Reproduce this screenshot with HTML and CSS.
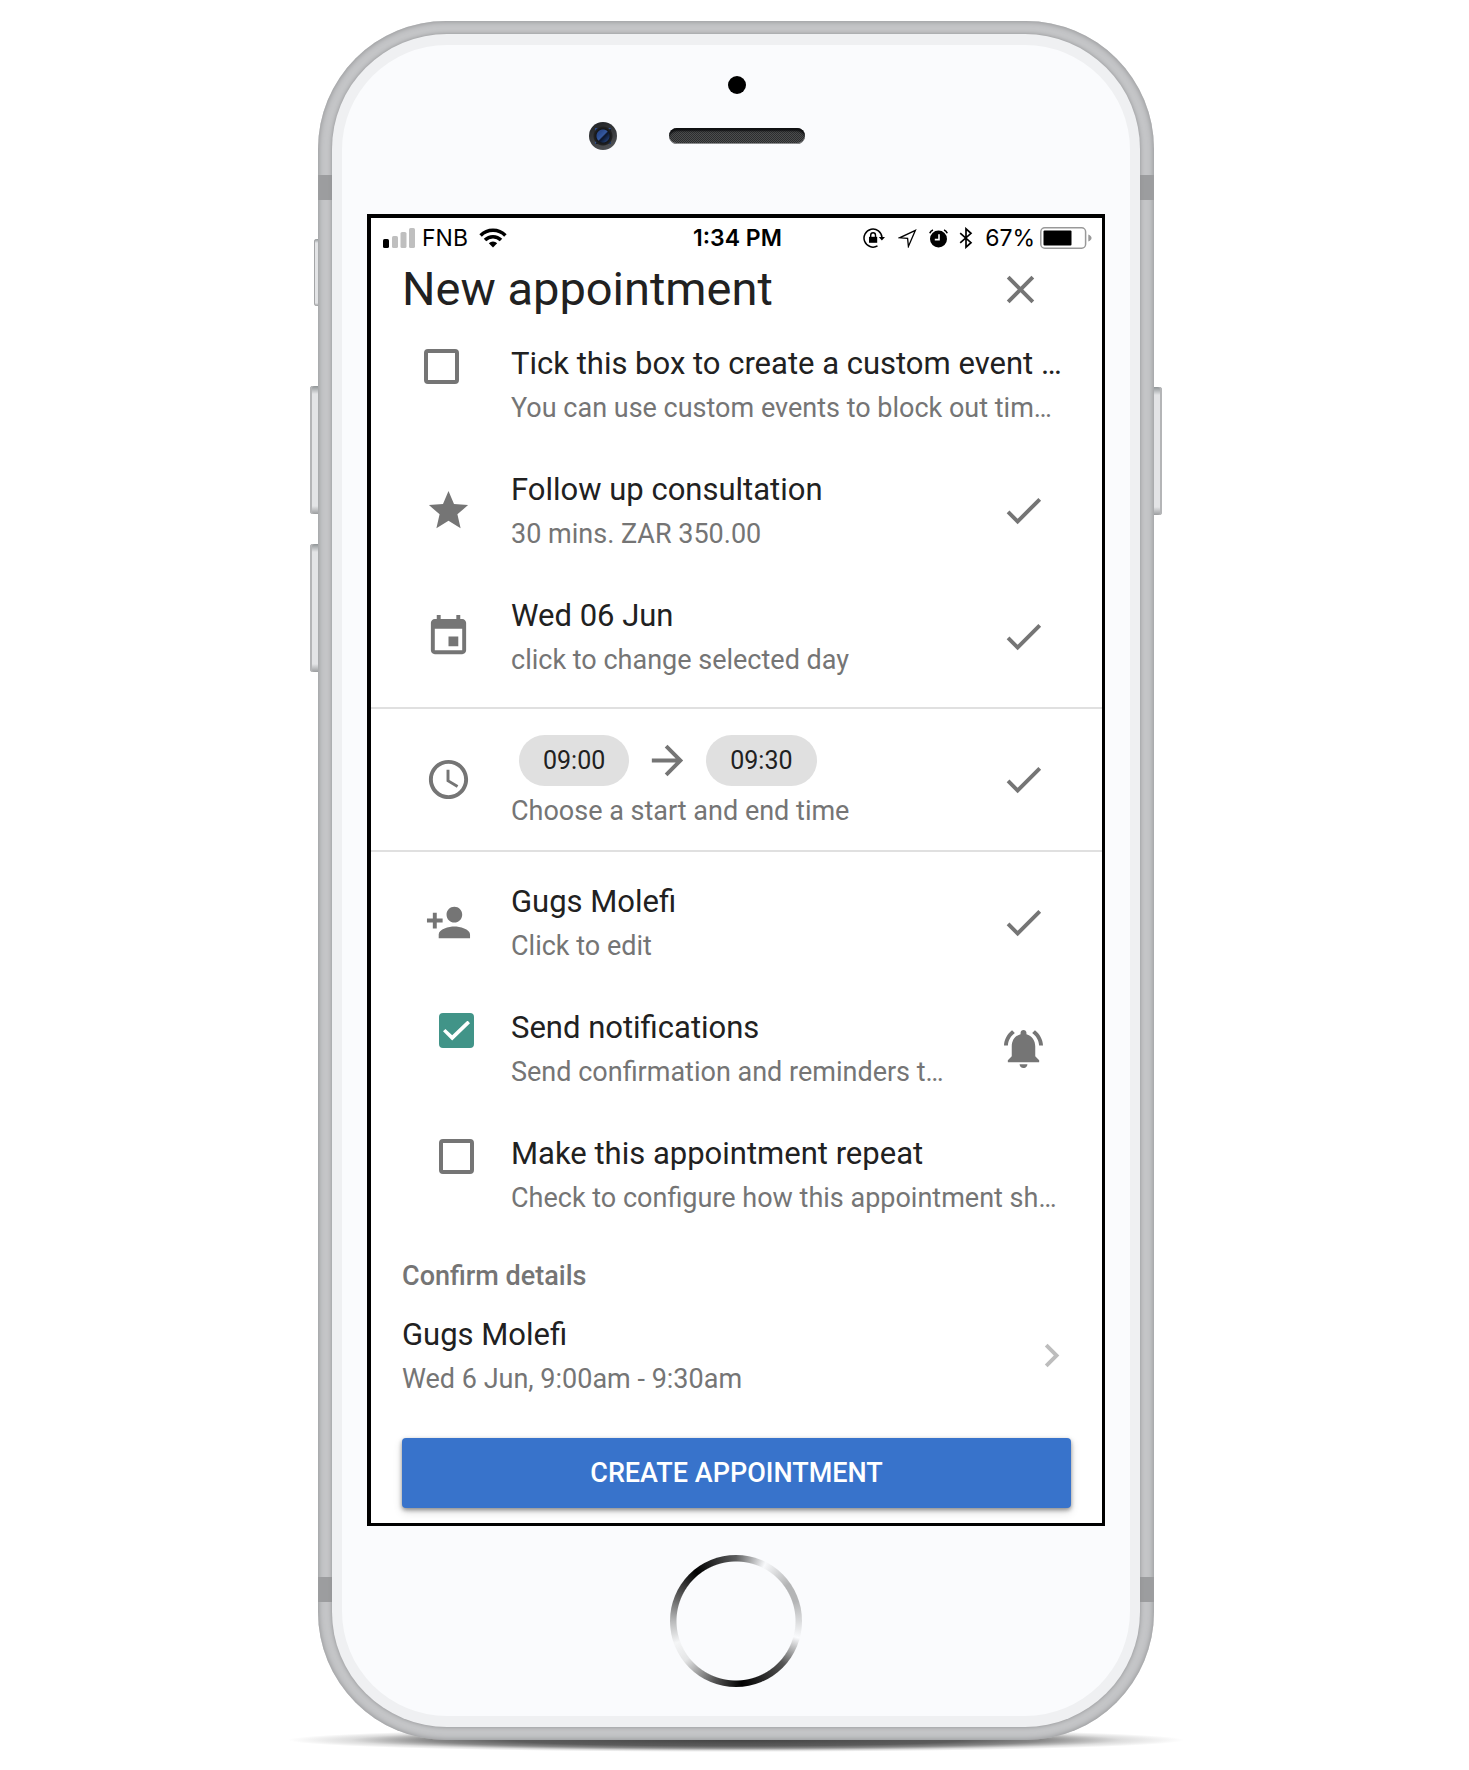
FILE: index.html
```html
<!DOCTYPE html>
<html lang="en">
<head>
<meta charset="utf-8">
<meta name="viewport" content="width=device-width, initial-scale=1">
<title>New appointment</title>
<link rel="stylesheet" href="styles.css">
</head>
<body>
<svg class="sprite" aria-hidden="true">
  <symbol id="i-close" viewBox="0 0 24 24"><path d="M19 6.41L17.59 5 12 10.59 6.41 5 5 6.41 10.59 12 5 17.59 6.41 19 12 13.41 17.59 19 19 17.59 13.41 12z"/></symbol>
  <symbol id="i-star" viewBox="0 0 24 24"><path d="M12 17.27L18.18 21l-1.64-7.03L22 9.24l-7.19-.61L12 2 9.19 8.63 2 9.24l5.46 4.73L5.82 21z"/></symbol>
  <symbol id="i-event" viewBox="0 0 24 24"><path d="M17 12h-5v5h5v-5zM16 1v2H8V1H6v2H5c-1.11 0-1.99.9-1.99 2L3 19c0 1.1.89 2 2 2h14c1.1 0 2-.9 2-2V5c0-1.1-.9-2-2-2h-1V1h-2zm3 18H5V8h14v11z"/></symbol>
  <symbol id="i-clock" viewBox="0 0 24 24"><path d="M11.99 2C6.47 2 2 6.48 2 12s4.47 10 9.99 10C17.52 22 22 17.52 22 12S17.52 2 11.99 2zM12 20c-4.42 0-8-3.58-8-8s3.58-8 8-8 8 3.58 8 8-3.58 8-8 8zm.5-13H11v6l5.25 3.15.75-1.23-4.5-2.67z"/></symbol>
  <symbol id="i-person" viewBox="0 0 24 24"><path d="M15 12c2.21 0 4-1.79 4-4s-1.79-4-4-4-4 1.79-4 4 1.79 4 4 4zm-9-2V7H4v3H1v2h3v3h2v-3h3v-2H6zm9 4c-2.67 0-8 1.34-8 4v2h16v-2c0-2.66-5.33-4-8-4z"/></symbol>
  <symbol id="i-check" viewBox="0 0 24 24"><path d="M9 16.17L4.83 12l-1.42 1.41L9 19 21 7l-1.41-1.41z"/></symbol>
  <symbol id="i-bell" viewBox="0 0 24 24"><path d="M7.58 4.08L6.15 2.65C3.75 4.48 2.17 7.3 2.03 10.5h2c.15-2.65 1.51-4.97 3.55-6.42zm12.39 6.42h2c-.15-3.2-1.73-6.02-4.12-7.85l-1.42 1.43c2.02 1.45 3.39 3.77 3.54 6.42zM18 11c0-3.07-1.64-5.64-4.5-6.32V4c0-.83-.67-1.5-1.5-1.5s-1.5.67-1.5 1.5v.68C7.63 5.36 6 7.92 6 11v5l-2 2v1h16v-1l-2-2v-5zm-6 11c.14 0 .27-.01.4-.04.65-.14 1.18-.58 1.44-1.18.1-.24.15-.5.15-.78h-4c.01 1.1.9 2 2.01 2z"/></symbol>
  <symbol id="i-arrow" viewBox="0 0 24 24"><path d="M12 4l-1.41 1.41L16.17 11H4v2h12.17l-5.58 5.59L12 20l8-8z"/></symbol>
  <symbol id="i-chevron" viewBox="0 0 24 24"><path d="M10 6L8.59 7.41 13.17 12l-4.58 4.59L10 18l6-6z"/></symbol>
</svg>

<main class="stage">
  <div class="phone">
    <span class="key key-mute"></span>
    <span class="key key-up"></span>
    <span class="key key-down"></span>
    <span class="key key-power"></span>
    <span class="band band-tl"></span>
    <span class="band band-tr"></span>
    <span class="band band-bl"></span>
    <span class="band band-br"></span>

    <div class="face">
      <div class="sensors">
        <span class="dot"></span>
        <div class="earpiece">
          <span class="camera"></span>
          <span class="speaker"></span>
        </div>
      </div>

      <div class="screen">
        <div class="status">
          <div class="status-side">
            <svg class="signal" viewBox="0 0 32 20" aria-hidden="true">
              <rect x="0" y="11" width="6" height="9" rx="1.6"/>
              <g fill="#bfbfbf"><rect x="9" y="8" width="6" height="12" rx="1.6"/><rect x="17.500" y="4" width="6" height="16" rx="1.600"/><rect x="26" y="0" width="6" height="20" rx="1.600"/></g>
            </svg>
            <span>FNB</span>
            <svg class="wifi" viewBox="0 0 28 20" aria-hidden="true">
              <g fill="none" stroke="#000" stroke-width="3.500"><path d="M1.600 7.400a17.500 17.500 0 0 1 24.800 0"/><path d="M6 12a11.300 11.300 0 0 1 16 0"/></g>
              <path d="M14 19.500l-4.200-4.200a6 6 0 0 1 8.400 0z"/>
            </svg>
          </div>
          <time class="status-time">1:34 PM</time>
          <div class="status-side status-right">
            <svg class="s-lock" viewBox="0 0 22 20" aria-hidden="true">
              <path d="M14.500 17.900A9 9 0 1 1 19 9.500" fill="none" stroke="#000" stroke-width="1.500"/>
              <path d="M15.800 9h6.200l-3.100 3.600z"/>
              <path d="M6 8.800h8.200v6H6z"/>
              <path d="M7.700 9V7.200a2.400 2.400 0 0 1 4.800 0V9" fill="none" stroke="#000" stroke-width="1.400"/>
            </svg>
            <svg class="s-nav" viewBox="0 0 19 19" aria-hidden="true"><path d="M17.400 1.300L1.600 8.800l8 .6.800 8z" fill="none" stroke="#000" stroke-width="1.300" stroke-linejoin="miter"/></svg>
            <svg class="s-alarm" viewBox="0 0 19 19" aria-hidden="true">
              <circle cx="9.500" cy="10" r="8.500"/>
              <path d="M.8 4.200A5 5 0 0 1 4 1M18.200 4.200A5 5 0 0 0 15 1" fill="none" stroke="#000" stroke-width="1.700"/>
              <path d="M10 5.200v5.400H5.800" fill="none" stroke="#fff" stroke-width="1.600"/>
            </svg>
            <svg class="s-bt" viewBox="0 0 14 22" aria-hidden="true"><path d="M1.200 6.200l10.800 9.500L7 20.200V1.800l5 4.500L1.200 15.800" fill="none" stroke="#000" stroke-width="1.700"/></svg>
            <span class="percent">67%</span>
            <svg class="battery" viewBox="0 0 52 22" aria-hidden="true">
              <rect x=".8" y=".8" width="44.800" height="20.400" rx="4" fill="none" stroke="#999" stroke-width="1.500"/>
              <rect x="3.500" y="3.500" width="28" height="15" rx="1"/>
              <path d="M48.300 7.500c2.500 1 3.200 2.200 3.200 3.500s-.7 2.500-3.200 3.500z" fill="#999"/>
            </svg>
          </div>
        </div>

        <header class="header">
          <h1>New appointment</h1>
          <button class="close" type="button" aria-label="Close"><svg class="icon"><use href="#i-close"/></svg></button>
        </header>

        <form class="form">
          <section class="group">
            <label class="row">
              <input class="box box-near" type="checkbox">
              <span class="text"><span class="title">Tick this box to create a custom event …</span><span class="sub">You can use custom events to block out tim…</span></span>
            </label>
            <button class="row" type="button">
              <svg class="icon lead"><use href="#i-star"/></svg>
              <span class="text"><span class="title">Follow up consultation</span><span class="sub">30 mins. ZAR 350.00</span></span>
              <svg class="icon trail"><use href="#i-check"/></svg>
            </button>
            <button class="row" type="button">
              <svg class="icon lead"><use href="#i-event"/></svg>
              <span class="text"><span class="title">Wed 06 Jun</span><span class="sub">click to change selected day</span></span>
              <svg class="icon trail"><use href="#i-check"/></svg>
            </button>
          </section>

          <section class="row row-time">
            <svg class="icon lead"><use href="#i-clock"/></svg>
            <div class="text">
              <div class="times">
                <button class="chip" type="button">09:00</button>
                <svg class="icon"><use href="#i-arrow"/></svg>
                <button class="chip" type="button">09:30</button>
              </div>
              <span class="sub">Choose a start and end time</span>
            </div>
            <svg class="icon trail"><use href="#i-check"/></svg>
          </section>

          <section class="group group-last">
            <button class="row" type="button">
              <svg class="icon lead"><use href="#i-person"/></svg>
              <span class="text"><span class="title">Gugs Molefi</span><span class="sub">Click to edit</span></span>
              <svg class="icon trail"><use href="#i-check"/></svg>
            </button>
            <label class="row">
              <input class="box" type="checkbox" checked>
              <span class="text"><span class="title">Send notifications</span><span class="sub">Send confirmation and reminders t…</span></span>
              <svg class="icon trail"><use href="#i-bell"/></svg>
            </label>
            <label class="row">
              <input class="box" type="checkbox">
              <span class="text"><span class="title">Make this appointment repeat</span><span class="sub">Check to configure how this appointment sh…</span></span>
            </label>
          </section>

          <section class="confirm">
            <h2>Confirm details</h2>
            <button class="summary" type="button">
              <span class="text"><span class="title">Gugs Molefi</span><span class="sub">Wed 6 Jun, 9:00am - 9:30am</span></span>
              <svg class="icon chevron"><use href="#i-chevron"/></svg>
            </button>
            <button class="create" type="submit">CREATE APPOINTMENT</button>
          </section>
        </form>
      </div>

      <button class="home" type="button" aria-label="Home"></button>
    </div>
  </div>
</main>
</body>
</html>
```
FILE: styles.css
```css
* {
  box-sizing: border-box;
}

body {
  margin: 0;
  background: #fff;
  color: #212121;
  font-family: Roboto, "Liberation Sans", sans-serif;
}

button {
  margin: 0;
  padding: 0;
  border: 0;
  background: none;
  color: inherit;
  font: inherit;
  text-align: left;
  cursor: pointer;
}

.sprite {
  display: none;
}

.stage {
  padding: 21px 8px 30px 11px;
}

/* Phone body */
.phone {
  position: relative;
  max-width: 836px;
  margin: 0 auto;
  padding: 13px 14px;
  border-radius: 128px;
  background: #c4c5c7;
  box-shadow: inset 0 0 5px 1px #98999b;
}

.phone::before {
  content: "";
  position: absolute;
  z-index: -1;
  left: -30px;
  right: -30px;
  bottom: -12px;
  height: 24px;
  background: radial-gradient(closest-side, #444 0%, #5c5c5c 50%, #888 68%, #ddd 86%, #fff 100%);
}

.face {
  position: relative;
  padding: 11px 10px;
  border-radius: 115px;
  background: #eff0f2;
  box-shadow: 0 0 4px #8e8f91;
  display: flex;
  flex-direction: column;
  isolation: isolate;
}

.face::before {
  content: "";
  position: absolute;
  z-index: -1;
  inset: 11px 10px;
  border-radius: 105px;
  background: #fafbfd;
}

.key {
  position: absolute;
  z-index: -1;
  width: 8px;
  height: 128px;
  border-radius: 3px 0 0 3px;
  background: linear-gradient(#8f9496, #e3e4e6 8px, #e3e4e6 calc(100% - 8px), #9b9d9f);
  box-shadow: inset 2px 0 #b4b5b7;
}

.key-mute {
  top: 218px;
  left: -4px;
  width: 4px;
  height: 67px;
  background: linear-gradient(#8f9496, #e3e4e6 4px, #e3e4e6 calc(100% - 3px), #9b9d9f);
  box-shadow: inset 1px 0 #a4a5a7;
}

.key-up {
  top: 365px;
  left: -8px;
}

.key-down {
  top: 523px;
  left: -8px;
}

.key-power {
  top: 366px;
  right: -8px;
  border-radius: 0 3px 3px 0;
  box-shadow: inset -2px 0 #b4b5b7;
}

.band {
  position: absolute;
  width: 14px;
  height: 25px;
  background: #9c9d9f;
}

.band-tl, .band-tr { top: 154px; }
.band-bl, .band-br { bottom: 138px; }
.band-tl, .band-bl { left: 0; }
.band-tr, .band-br { right: 0; }

.sensors {
  display: flex;
  flex-direction: column;
  align-items: center;
  gap: 28px;
  padding: 31px 0 64px 2px;
}

.dot {
  width: 18px;
  height: 18px;
  border-radius: 50%;
  background: #000;
}

.earpiece {
  width: 100%;
  display: grid;
  grid-template-columns: 1fr 136px 1fr;
  column-gap: 52px;
  align-items: center;
}

.camera {
  justify-self: end;
  width: 28px;
  height: 28px;
  border-radius: 50%;
  background:
    radial-gradient(circle, transparent 6px, #15171a 7px, #222 9px, transparent 10px),
    linear-gradient(135deg, #2a4a8c 30%, #35599f 48%, #0c1426 54%, #1d3768 75%) center / 16px 16px no-repeat,
    linear-gradient(160deg, #1d1f22, #55575a);
}

.speaker {
  height: 16px;
  border-radius: 8px;
  background: repeating-conic-gradient(#2c2d2e 0 25%, #4c4d4e 0 50%) 0 0 / 2px 2px;
  box-shadow: inset 0 4px 2px -1px #0f1012, inset 0 -1px #8b8c8e;
}

/* Screen */
.screen {
  margin: 0 25px;
  border: solid #000;
  border-width: 4px 3px 3px 4px;
  background: #fff;
  overflow: hidden;
}

.status {
  display: grid;
  grid-template-columns: 1fr auto 1fr;
  align-items: center;
  height: 40px;
  padding: 0 10px 0 12px;
  color: #000;
  font: 23px/40px Inter, Roboto, sans-serif;
}

.status svg {
  flex: none;
}

.status-side {
  display: flex;
  align-items: center;
}

.status-right {
  justify-content: flex-end;
}

.status-time {
  font-weight: 600;
}

.signal { width: 32px; height: 20px; margin-right: 7px; }
.wifi { width: 28px; height: 20px; margin-left: 11px; }
.s-lock { width: 22px; height: 20px; margin-right: 13px; }
.s-nav { width: 19px; height: 19px; margin-right: 12px; }
.s-alarm { width: 19px; height: 19px; margin-right: 11px; }
.s-bt { width: 14px; height: 22px; margin-right: 12px; }
.battery { width: 52px; height: 22px; margin-left: 5px; }

.header {
  display: flex;
  align-items: center;
  justify-content: space-between;
  height: 63px;
  padding: 0 58px 0 31px;
}

.header h1 {
  margin: 0;
  padding-bottom: 2px;
  font-size: 47px;
  font-weight: 400;
  line-height: 60px;
}

.close {
  display: flex;
  color: #757575;
}

.icon {
  flex: none;
  width: 47px;
  height: 47px;
  fill: currentColor;
}

/* List rows */
.group {
  padding-bottom: 8px;
}

.group-last {
  padding: 7px 0 0;
}

.row {
  display: grid;
  grid-template-columns: 140px minmax(0, 1fr) auto;
  align-items: center;
  width: 100%;
  padding-right: 31px;
  cursor: pointer;
}

.text {
  display: block;
  padding: 21px 0 17px;
}

.title,
.sub {
  display: block;
  line-height: 44px;
  white-space: nowrap;
}

.title {
  font-size: 31px;
}

.sub {
  color: #757575;
  font-size: 27px;
}

.lead {
  margin-left: 54px;
  color: #757575;
}

.trail {
  margin-right: 24px;
  color: #757575;
}

.box {
  appearance: none;
  display: grid;
  place-items: center;
  align-self: start;
  width: 35px;
  height: 35px;
  margin: 28px 0 0 68px;
  border: 4px solid #757575;
  border-radius: 4px;
}

.box-near {
  margin-left: 53px;
}

.box:checked {
  border-color: #419488;
  background: #419488;
}

.box:checked::before {
  content: "";
  width: 27px;
  height: 20px;
  background: #fff;
  clip-path: polygon(34% 74%, 9% 42%, 0 54%, 34% 100%, 100% 14%, 91% 0);
}

.row-time {
  border: solid #e0e0e0;
  border-width: 2px 0;
  cursor: default;
}

.row-time .text {
  padding-top: 26px;
}

.times {
  display: flex;
  align-items: center;
  gap: 15px;
  margin: 0 0 3px 8px;
  color: #757575;
}

.chip {
  padding: 0 24px;
  border-radius: 26px;
  background: #e0e0e0;
  color: #212121;
  font-size: 25px;
  line-height: 51px;
}

/* Summary and submit */
.confirm {
  padding: 23px 31px 15px;
}

.confirm h2 {
  margin: 0;
  color: #757575;
  font-size: 27px;
  font-weight: 500;
  line-height: 32px;
}

.summary {
  display: flex;
  align-items: center;
  justify-content: space-between;
  width: 100%;
}

.chevron {
  margin-right: -4px;
  color: #bdbdbd;
}

.create {
  display: block;
  width: 100%;
  margin-top: 20px;
  border-radius: 4px;
  background: #3873cb;
  box-shadow: 0 2px 4px rgba(0, 0, 0, .4), 0 4px 10px rgba(0, 0, 0, .14);
  color: #fff;
  font-size: 27px;
  font-weight: 500;
  line-height: 70px;
  text-align: center;
}

.home {
  align-self: center;
  width: 132px;
  height: 132px;
  margin: 29px 0;
  border-radius: 50%;
  background:
    radial-gradient(circle, #fafbfd 59px, transparent 60px),
    conic-gradient(#5c5d5e 0deg, #f8f9fb 27deg, #b4b5b6 55deg, #b4b5b6 72deg, #fafbfd 105deg, #555 132deg, #000 175deg, #555 200deg, #e4e5e6 232deg, #f4f5f6 250deg, #b8b9ba 270deg, #666 290deg, #000 321deg, #5c5d5e 360deg);
}
```
